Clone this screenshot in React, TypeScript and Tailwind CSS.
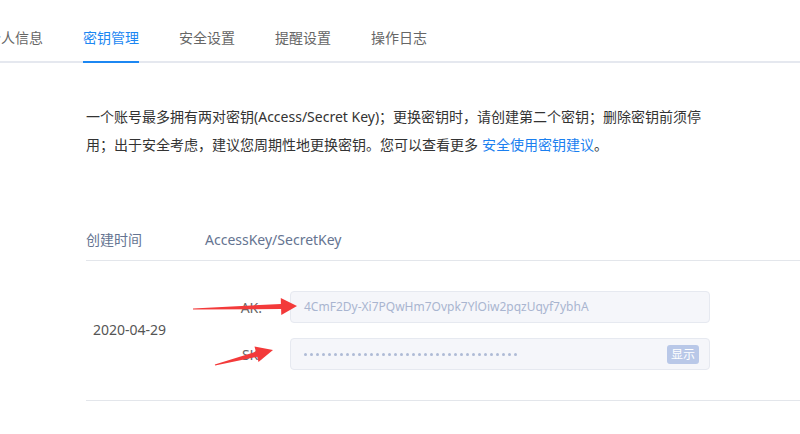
const TABS = ['个人信息', '密钥管理', '安全设置', '提醒设置', '操作日志']

const AK = '4CmF2Dy-Xi7PQwHm7Ovpk7YlOiw2pqzUqyf7ybhA'

// red annotation arrow, tapered shaft + triangle head
function arrowPoints(tail: [number, number], tip: [number, number], headLen = 17, headHalf = 8.5) {
  const dx = tip[0] - tail[0]
  const dy = tip[1] - tail[1]
  const len = Math.hypot(dx, dy)
  const ux = dx / len
  const uy = dy / len
  const nx = -uy
  const ny = ux
  const bx = tip[0] - ux * headLen
  const by = tip[1] - uy * headLen
  const pts: [number, number][] = [
    [tail[0] + nx * 0.6, tail[1] + ny * 0.6],
    [bx + nx * 2.6, by + ny * 2.6],
    [bx + nx * headHalf, by + ny * headHalf],
    tip,
    [bx - nx * headHalf, by - ny * headHalf],
    [bx - nx * 2.6, by - ny * 2.6],
    [tail[0] - nx * 0.6, tail[1] - ny * 0.6],
  ]
  return pts.map(p => `${p[0].toFixed(1)},${p[1].toFixed(1)}`).join(' ')
}

function KeyField({ label, children }: { label: string; children: React.ReactNode }) {
  return (
    <div className="flex items-center">
      <span className="w-[78px] pr-[21px] text-right text-[14px] text-[#666]">{label}</span>
      <div className="ml-[7px] flex h-[32px] w-[420px] items-center rounded-[4px] border border-[#e6e9f0] bg-[#f5f6fa] pl-[13px] pr-[10px]">
        {children}
      </div>
    </div>
  )
}

export default function App() {
  return (
    <div
      className="relative h-[434px] w-[800px] overflow-hidden bg-white"
      style={{ fontFamily: '"Noto Sans", "Noto Sans CJK SC", sans-serif' }}
    >
      {/* Tabs */}
      <div className="flex h-[63px] border-b-2 border-[#e5e8ef]">
        <div className="-ml-[13px] flex gap-10">
          {TABS.map((t, i) => (
            <div
              key={t}
              className={
                i === 1
                  ? '-mb-[2px] border-b-2 border-[#1c87f2] pt-[27px] pb-[12px] text-[14px] leading-[22px] text-[#1c87f2]'
                  : '-mb-[2px] border-b-2 border-transparent pt-[27px] pb-[12px] text-[14px] leading-[22px] text-[#666]'
              }
            >
              {t}
            </div>
          ))}
        </div>
      </div>

      <div className="pl-[86px]">
        <p className="mt-[40px] w-[632px] text-[14px] leading-[28px] text-[#333]">
          一个账号最多拥有两对密钥(Access/Secret Key)；更换密钥时，请创建第二个密钥；删除密钥前须停用；出于安全考虑，建议您周期性地更换密钥。您可以查看更多
          <a className="ml-[4px] text-[#1a7ff0]">安全使用密钥建议</a>。
        </p>

        {/* Table header */}
        <div className="mt-[71px] flex border-b border-[#e3e6eb] pb-[10px] text-[14px] leading-[20px] text-[#657491]">
          <div className="w-[119px]">创建时间</div>
          <div>AccessKey/SecretKey</div>
        </div>

        {/* Row */}
        <div className="flex items-center border-b border-[#e3e6eb] py-[30px]">
          <div className="w-[119px] pl-[7px] pb-[3px] text-[14px] text-[#555]">2020-04-29</div>
          <div className="flex flex-col gap-[15px]">
            <KeyField label="AK:">
              <span className="text-[12px] text-[#a9b5d0]">{AK}</span>
            </KeyField>
            <KeyField label="SK:">
              <div className="flex flex-1 items-center gap-[3px]">
                {Array.from({ length: 36 }).map((_, i) => (
                  <span key={i} className="h-[3px] w-[3px] rounded-full bg-[#afbbd6]" />
                ))}
              </div>
              <button className="h-[19px] w-[32px] rounded-[3px] bg-[#b9c8e8] text-[12px] leading-[19px] text-white">
                显示
              </button>
            </KeyField>
          </div>
        </div>
      </div>

      {/* red annotation arrows */}
      <svg className="pointer-events-none absolute left-0 top-0" width="800" height="434">
        <polygon points={arrowPoints([193, 309], [297, 306], 16, 8.5)} fill="#f33a3a" />
        <polygon points={arrowPoints([215, 365], [273, 350], 17, 8)} fill="#f33a3a" />
      </svg>
    </div>
  )
}
